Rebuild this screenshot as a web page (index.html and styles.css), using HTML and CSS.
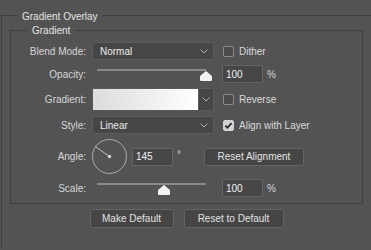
FILE: index.html
```html
<!DOCTYPE html>
<html>
<head>
<meta charset="utf-8">
<link rel="stylesheet" href="styles.css">
</head>
<body>
<fieldset class="group outer">
  <legend>Gradient Overlay</legend>
  <fieldset class="group inner">
    <legend>Gradient</legend>
    <div class="rows">
      <div class="row">
        <span class="lbl">Blend Mode:</span>
        <div class="select"><span>Normal</span><svg class="chev" width="8" height="5" viewBox="0 0 8 5"><path d="M0.5 0.5 L4 4 L7.5 0.5" fill="none" stroke="#b0b0b0"/></svg></div>
        <span class="check"><span class="box"></span>Dither</span>
      </div>
      <div class="row">
        <span class="lbl">Opacity:</span>
        <div class="slider"><div class="track"></div><svg class="thumb" style="left:calc(5px + 109px * 1 - 6px)" width="12" height="10" viewBox="0 0 12 10"><path d="M6 0 L11.4 4.4 Q12 4.9 12 5.7 V9 Q12 10 11 10 H1 Q0 10 0 9 V5.7 Q0 4.9 0.6 4.4 Z" fill="#f2f2f2"/></svg></div>
        <input class="num" type="text" value="100">
        <span class="unit">%</span>
      </div>
      <div class="row tall">
        <span class="lbl">Gradient:</span>
        <div class="gradpick"><div class="swatch"></div><div class="arrow"><svg width="8" height="5" viewBox="0 0 8 5"><path d="M0.5 0.5 L4 4 L7.5 0.5" fill="none" stroke="#b0b0b0"/></svg></div></div>
        <span class="check"><span class="box"></span>Reverse</span>
      </div>
      <div class="row">
        <span class="lbl">Style:</span>
        <div class="select"><span>Linear</span><svg class="chev" width="8" height="5" viewBox="0 0 8 5"><path d="M0.5 0.5 L4 4 L7.5 0.5" fill="none" stroke="#b0b0b0"/></svg></div>
        <span class="check"><span class="box on"><svg width="11" height="11" viewBox="0 0 11 11"><path d="M2.3 5.6 L4.4 7.7 L8.6 3.2" fill="none" stroke="#2b2b2b" stroke-width="1.7"/></svg></span>Align with Layer</span>
      </div>
      <div class="row angle">
        <span class="lbl">Angle:</span>
        <svg class="dial" width="35" height="35" viewBox="0 0 35 35"><circle cx="17.5" cy="17.5" r="17" fill="none" stroke="#ababab"/><line x1="17.5" y1="17.5" x2="3.6" y2="7.8" stroke="#c4c4c4"/><circle cx="17.5" cy="17.5" r="1.8" fill="#d0d0d0"/></svg>
        <input class="num" type="text" value="145">
        <span class="deg">°</span>
        <button class="btn align">Reset Alignment</button>
      </div>
      <div class="row">
        <span class="lbl">Scale:</span>
        <div class="slider"><div class="track"></div><svg class="thumb" style="left:calc(5px + 109px * 0.615 - 6px)" width="12" height="10" viewBox="0 0 12 10"><path d="M6 0 L11.4 4.4 Q12 4.9 12 5.7 V9 Q12 10 11 10 H1 Q0 10 0 9 V5.7 Q0 4.9 0.6 4.4 Z" fill="#f2f2f2"/></svg></div>
        <input class="num" type="text" value="100">
        <span class="unit">%</span>
      </div>
    </div>
  </fieldset>
  <div class="actions">
    <button class="btn big make">Make Default</button>
    <button class="btn big reset">Reset to Default</button>
  </div>
</fieldset>
</body>
</html>
```
FILE: styles.css
```css
html, body {
  margin: 0;
  padding: 0;
}
body {
  width: 371px;
  height: 250px;
  overflow: hidden;
  background: #535353;
  font-family: "Liberation Sans", Arial, sans-serif;
  font-size: 10px;
  color: #d9d9d9;
}
.group {
  min-width: 0;
  min-inline-size: 0;
  border: 1px solid #3f3f3f;
}
.group > legend {
  font-size: 10px;
  line-height: 12px;
  color: #e4e4e4;
  padding: 3px 4px 0 5px;
}
.outer {
  margin: 8px 0 0 1px;
  padding: 0 0 21px 0;
  border-right: none;
  border-bottom: none;
}
.outer > legend {
  margin-left: 15px;
}
.inner {
  margin: 1px 0 0 8px;
  width: 353px;
  box-sizing: border-box;
  padding: 5px 0 6px 0;
}
.inner > legend {
  padding-top: 1px;
  margin-left: 16px;
}
.rows {
  display: flex;
  flex-direction: column;
  gap: 5px;
}
.row {
  display: flex;
  align-items: center;
  height: 18px;
}
.row.tall {
  height: 23px;
}
.row.angle {
  height: 35px;
}
.lbl {
  flex: none;
  width: 75px;
  margin-right: 6px;
  text-align: right;
  color: #d6d6d6;
}
.select {
  flex: none;
  width: 122px;
  height: 18px;
  box-sizing: border-box;
  display: flex;
  align-items: center;
  justify-content: space-between;
  padding: 0 5px 0 7px;
  background: #464646;
  border: 1px solid #5c5c5c;
  border-radius: 2px;
  color: #ececec;
}
.check {
  display: flex;
  align-items: center;
  margin-left: 9px;
  color: #dadada;
}
.box {
  width: 11px;
  height: 11px;
  box-sizing: border-box;
  border: 1px solid #8c8c8c;
  border-radius: 2px;
  background: #4a4a4a;
  margin-right: 5px;
  display: flex;
}
.box.on {
  background: #d2d2d2;
  border-color: #d2d2d2;
}
.box.on svg {
  margin: -1px;
}
.slider {
  flex: none;
  position: relative;
  width: 122px;
  height: 18px;
}
.track {
  margin: 4px 0 0 5px;
  width: 109px;
  height: 2px;
  background: #8a8a8a;
}
.thumb {
  position: absolute;
  top: 6px;
}
.num {
  flex: none;
  width: 41px;
  height: 18px;
  box-sizing: border-box;
  margin: 0 0 0 8px;
  padding: 0 0 0 3px;
  background: #464646;
  border: 1px solid #646464;
  border-radius: 0;
  font-family: "Liberation Sans", Arial, sans-serif;
  font-size: 10px;
  color: #f2f2f2;
  outline: none;
}
.unit {
  margin-left: 4px;
  color: #d6d6d6;
}
.gradpick {
  flex: none;
  width: 122px;
  height: 23px;
  box-sizing: border-box;
  display: flex;
  border: 1px solid #5a5a5a;
  border-radius: 2px;
  background: #464646;
}
.swatch {
  flex: 1;
  background: linear-gradient(to right, #dcdcdc, #ffffff);
}
.arrow {
  flex: none;
  width: 14px;
  display: flex;
  align-items: center;
  justify-content: center;
  border-left: 1px solid #5a5a5a;
}
.dial {
  flex: none;
  display: block;
}
.row.angle .num {
  margin-left: 5px;
}
.deg {
  margin-left: 4px;
  width: 6px;
  color: #d6d6d6;
  align-self: flex-start;
  margin-top: 10px;
}
.btn {
  box-sizing: border-box;
  height: 18px;
  padding: 0;
  background: #454545;
  border: 1px solid #636363;
  border-radius: 2px;
  font-family: "Liberation Sans", Arial, sans-serif;
  font-size: 10px;
  color: #e2e2e2;
}
.btn.align {
  width: 100px;
  margin-left: 21px;
}
.actions {
  display: flex;
  justify-content: center;
  gap: 10px;
  margin-top: 5px;
}
.btn.big {
  height: 19px;
}
.btn.make {
  width: 84px;
}
.btn.reset {
  width: 100px;
}
```
